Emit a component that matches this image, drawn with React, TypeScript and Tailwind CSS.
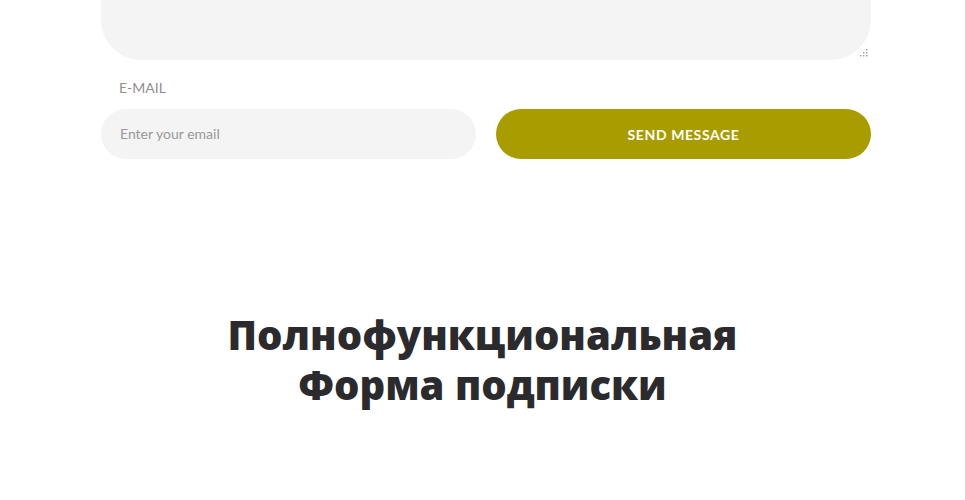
import React from "react";

export default function App() {
  return (
    <div className="w-[965px] h-[500px] bg-white overflow-hidden font-['Lato',sans-serif]">
      <div className="ml-[101px] w-[770px]">
        <div className="relative h-[60px] bg-[#f4f4f4] rounded-b-[40px]">
          <svg className="absolute right-[2px] bottom-[2px]" width="10" height="10" viewBox="0 0 10 10">
            <rect x="7" y="1" width="1.4" height="1.4" fill="#9a9a9a" />
            <rect x="7" y="4" width="1.4" height="1.4" fill="#9a9a9a" />
            <rect x="4" y="4" width="1.4" height="1.4" fill="#9a9a9a" />
            <rect x="7" y="7" width="1.4" height="1.4" fill="#9a9a9a" />
            <rect x="4" y="7" width="1.4" height="1.4" fill="#9a9a9a" />
            <rect x="1" y="7" width="1.4" height="1.4" fill="#9a9a9a" />
          </svg>
        </div>
        <div className="mt-[18px] pl-[18px] text-[14px] leading-[20px] text-[#8f8f8f] uppercase">E-mail</div>
        <div className="mt-[11px] grid grid-cols-2 gap-[20px]">
          <input
            type="email"
            placeholder="Enter your email"
            className="h-[50px] rounded-full bg-[#f4f4f4] px-[19px] pb-[2px] text-[14px] text-[#333] placeholder:text-[#999] outline-none font-['Lato',sans-serif]"
          />
          <button className="h-[50px] rounded-full bg-[#a89c00] text-white text-[14px] font-bold uppercase tracking-[0.6px] font-['Lato',sans-serif]">
            Send message
          </button>
        </div>
      </div>
      <h2 className="mt-[151px] text-center font-['Open_Sans',sans-serif] font-extrabold text-[40px] leading-[50px] text-[#2b2b2e]">
        Полнофункциональная
        <br />
        Форма подписки
      </h2>
    </div>
  );
}
